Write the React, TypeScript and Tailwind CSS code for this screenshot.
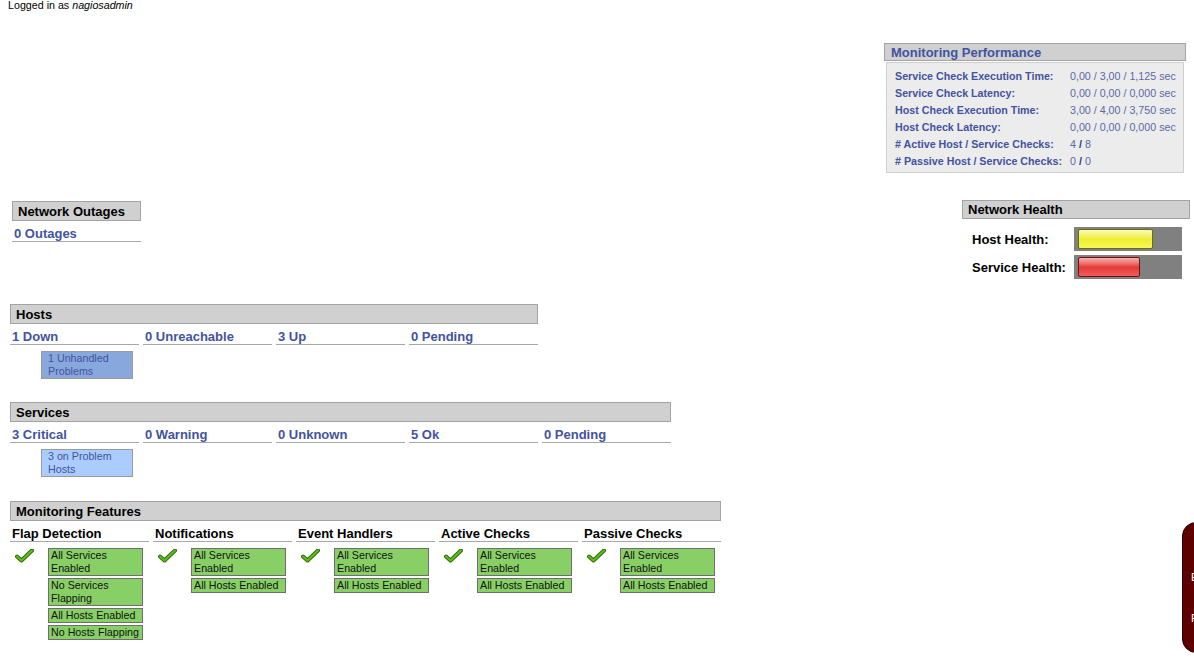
const BLUE = "text-[#4253a0]";

const PERF = [
  ["Service Check Execution Time:", "0,00 / 3,00 / 1,125 sec"],
  ["Service Check Latency:", "0,00 / 0,00 / 0,000 sec"],
  ["Host Check Execution Time:", "3,00 / 4,00 / 3,750 sec"],
  ["Host Check Latency:", "0,00 / 0,00 / 0,000 sec"],
];

const FEATURES = [
  { title: "Flap Detection", items: ["All Services Enabled", "No Services Flapping", "All Hosts Enabled", "No Hosts Flapping"] },
  { title: "Notifications", items: ["All Services Enabled", "All Hosts Enabled"] },
  { title: "Event Handlers", items: ["All Services Enabled", "All Hosts Enabled"] },
  { title: "Active Checks", items: ["All Services Enabled", "All Hosts Enabled"] },
  { title: "Passive Checks", items: ["All Services Enabled", "All Hosts Enabled"] },
];

function SectionHeader({ title, className = "" }: { title: string; className?: string }) {
  return (
    <div className={`h-[20px] border border-[#a3a3a3] bg-[#d0d0d0] pl-[5px] pt-px text-[13px] font-bold leading-[17px] text-black ${className}`}>
      {title}
    </div>
  );
}

function Cell({ label, dark }: { label: string; dark?: boolean }) {
  return (
    <div className={`border-b border-[#a8a8a8] pl-[2px] pt-[5px] text-[13px] font-bold leading-[15px] ${dark ? "text-black" : BLUE}`}>
      {label}
    </div>
  );
}

function Check() {
  return (
    <svg width="19" height="14" viewBox="0 0 19 14" aria-hidden="true">
      <path d="M2 7.5 L6.5 11.5 L17 1.5" fill="none" stroke="#2f6b0a" strokeWidth="4" strokeLinecap="round" strokeLinejoin="round" />
      <path d="M2 7.5 L6.5 11.5 L17 1.5" fill="none" stroke="#5cbf1c" strokeWidth="2" strokeLinecap="round" strokeLinejoin="round" />
    </svg>
  );
}

function HealthBar({ label, width, tone }: { label: string; width: number; tone: "yellow" | "red" }) {
  const bar =
    tone === "yellow"
      ? "border-[#6b6b10] bg-gradient-to-b from-[#fbfbb0] via-[#eeee2e] to-[#f7f755]"
      : "border-[#701010] bg-gradient-to-b from-[#f7b0b0] via-[#e23a3a] to-[#f25a5a]";
  return (
    <div className="flex h-[24px] items-center">
      <div className="w-[112px] whitespace-nowrap pl-[10px] pt-px text-[13px] font-bold text-black">{label}</div>
      <div className="h-[24px] w-[108px] bg-[#808080] pl-[4px] pt-[2px]">
        <div className={`h-[20px] rounded-[2px] border ${bar}`} style={{ width }} />
      </div>
    </div>
  );
}

export default function App() {
  return (
    <div className="relative h-[658px] w-[1194px] overflow-hidden bg-white font-['Liberation_Sans',Arial,sans-serif] text-black">
      <div className="h-[43px] pl-[8px] text-[10.7px] leading-[10px]">
        Logged in as <i>nagiosadmin</i>
      </div>

      {/* monitoring performance */}
      <div className="flex h-[157px] justify-end pr-[8px]">
        <div className="w-[302px]">
          <div className={`h-[18px] border border-[#a3a3a3] bg-[#d0d0d0] pl-[6px] text-[13px] font-bold leading-[17px] ${BLUE}`}>
            Monitoring Performance
          </div>
          <div className="mx-[2px] mt-px h-[111px] border border-[#cfcfcf] bg-[#ececec] pl-[8px] pt-[5px] text-[10.7px] leading-[17px]">
            {PERF.map(([k, v]) => (
              <div key={k} className="flex">
                <div className={`w-[175px] font-bold ${BLUE}`}>{k}</div>
                <div className="text-[#5a68a8]">{v}</div>
              </div>
            ))}
            <div className="flex">
              <div className={`w-[175px] font-bold ${BLUE}`}># Active Host / Service Checks:</div>
              <div className="text-[#5a68a8]">4 <b className="text-[#2a3a80]">/</b> 8</div>
            </div>
            <div className="flex">
              <div className={`w-[175px] font-bold ${BLUE}`}># Passive Host / Service Checks:</div>
              <div className="text-[#5a68a8]">0 <b className="text-[#2a3a80]">/</b> 0</div>
            </div>
          </div>
        </div>
      </div>

      {/* outages + health */}
      <div className="flex h-[104px] items-start justify-between">
        <div className="ml-[12px] mt-px w-[129px]">
          <SectionHeader title="Network Outages" />
          <Cell label="0 Outages" />
        </div>
        <div className="mr-[4px] w-[228px]">
          <div className="h-[19px] border border-[#a3a3a3] bg-[#d0d0d0] pl-[5px] text-[13px] font-bold leading-[17px]">
            Network Health
          </div>
          <div className="mt-[8px] flex flex-col gap-[4px]">
            <HealthBar label="Host Health:" width={75} tone="yellow" />
            <HealthBar label="Service Health:" width={62} tone="red" />
          </div>
        </div>
      </div>

      {/* hosts */}
      <div className="ml-[10px] w-[528px]">
        <SectionHeader title="Hosts" />
        <div className="grid grid-cols-[repeat(4,129px)] gap-x-[4px]">
          <Cell label="1 Down" />
          <Cell label="0 Unreachable" />
          <Cell label="3 Up" />
          <Cell label="0 Pending" />
        </div>
        <div className={`ml-[31px] mt-[6px] h-[28px] w-[92px] border border-[#9a9a9a] bg-[#88a8dd] pl-[6px] text-[10.7px] leading-[13px] ${BLUE}`}>
          1 Unhandled Problems
        </div>
      </div>

      {/* services */}
      <div className="ml-[10px] mt-[23px] w-[661px]">
        <SectionHeader title="Services" />
        <div className="grid grid-cols-[repeat(5,129px)] gap-x-[4px]">
          <Cell label="3 Critical" />
          <Cell label="0 Warning" />
          <Cell label="0 Unknown" />
          <Cell label="5 Ok" />
          <Cell label="0 Pending" />
        </div>
        <div className={`ml-[31px] mt-[6px] h-[28px] w-[92px] border border-[#9a9a9a] bg-[#aaccff] pl-[6px] text-[10.7px] leading-[13px] ${BLUE}`}>
          3 on Problem Hosts
        </div>
      </div>

      {/* monitoring features */}
      <div className="ml-[10px] mt-[24px] w-[711px]">
        <SectionHeader title="Monitoring Features" />
        <div className="grid grid-cols-[repeat(5,139px)] gap-x-[4px]">
          {FEATURES.map((f) => (
            <div key={f.title}>
              <Cell label={f.title} dark />
              <div className="mt-[6px] flex">
                <div className="w-[38px] pl-[5px] pt-[1px]">
                  <Check />
                </div>
                <div className="flex flex-col gap-[2px]">
                  {f.items.map((it) => (
                    <div key={it} className="w-[95px] border border-[#6e6e6e] bg-[#88d066] pl-[2px] text-[10.7px] leading-[13px] text-[#111]">
                      {it}
                    </div>
                  ))}
                </div>
              </div>
            </div>
          ))}
        </div>
      </div>

      {/* cut-off side tab */}
      <div className="absolute left-[1182px] top-[522px] flex h-[131px] w-[40px] flex-col rounded-l-[14px] border border-[#1a0000] bg-[#5e0000] pl-[8px] pt-[48px] text-[11px] leading-[13px] text-white">
        <span>E</span>
        <span className="mt-[28px]">R</span>
      </div>
    </div>
  );
}
